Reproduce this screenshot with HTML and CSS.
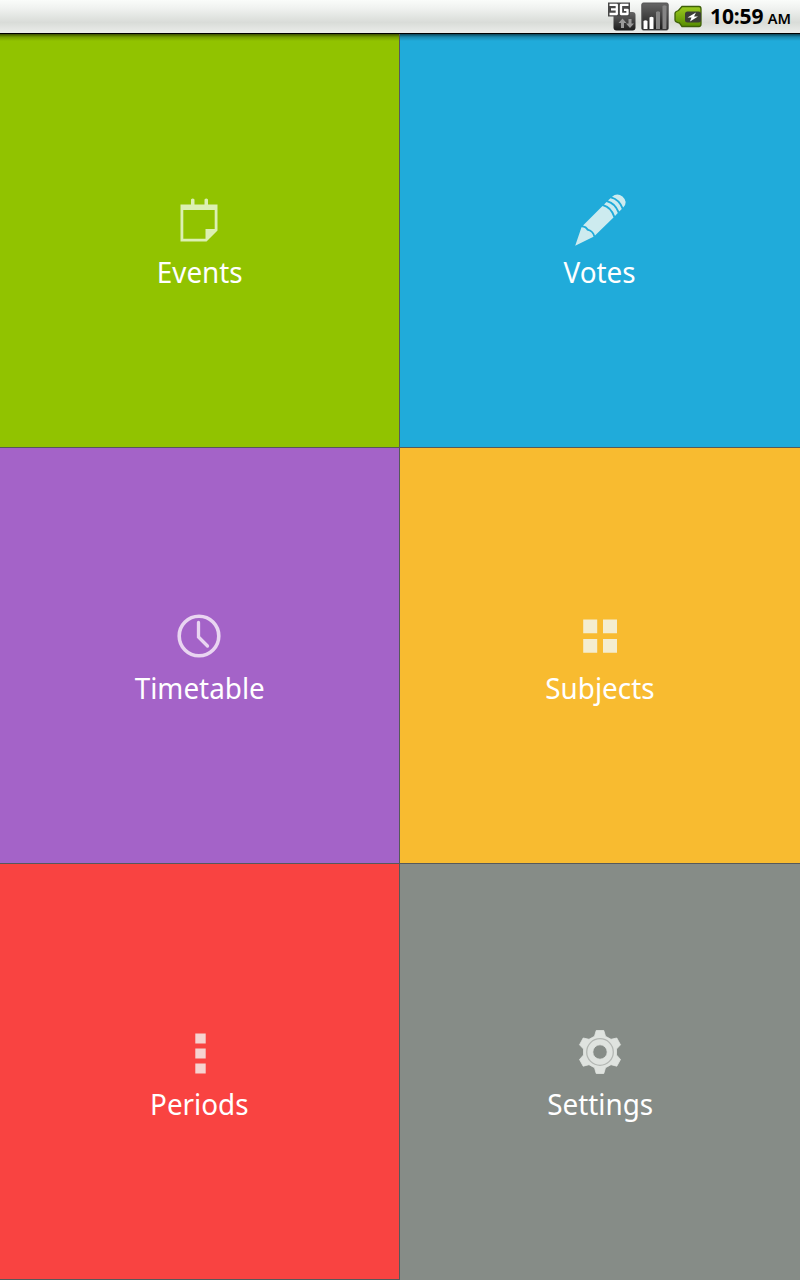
FILE: index.html
```html
<!DOCTYPE html>
<html lang="en">
<head>
<meta charset="utf-8">
<title>School diary</title>
<link rel="stylesheet" href="styles.css">
</head>
<body>
<header class="status">
  <svg class="status-icon" width="28" height="30" viewBox="0 0 28 30">
    <defs><linearGradient id="dark" x1="0" y1="0" x2="0" y2="1"><stop offset="0" stop-color="#666"/><stop offset="1" stop-color="#1c1c1c"/></linearGradient></defs>
    <rect x="5.500" y="11" width="22" height="18.500" rx="3" fill="url(#dark)"/>
    <path d="M0 1.500H22V15.500H0Z" fill="#484848"/>
    <path d="M1.500 3.800H8.800V13H1.500M3 8.400H8.800M20.500 3.800H13V13H19.500V8.800H16" fill="none" stroke="#fff" stroke-width="2.300" stroke-linejoin="round"/>
    <path d="M13 27V22H10.500L14.500 17.500L18.500 22H16V27ZM20.500 18H23.500V22.500H26L22 27L18 22.500H20.500Z" fill="#999"/>
  </svg>
  <svg class="status-icon" width="28" height="30" viewBox="0 0 28 30">
    <rect x="0.800" y="2" width="26.400" height="27" rx="1.500" fill="url(#dark)" stroke="#555"/>
    <path d="M2.500 20Q4.500 18.500 6.500 20V28H2.500ZM8.500 16.500Q10.500 15 12.500 16.500V28H8.500Z" fill="#fff"/>
    <path d="M15 11Q17 9.500 19 11V28H15ZM21.500 5Q23.500 3.500 25.500 5V28H21.500Z" fill="#858585"/>
  </svg>
  <svg class="status-icon" width="28" height="30" viewBox="0 0 28 30">
    <defs><linearGradient id="cell" x1="0" y1="0" x2="0" y2="1"><stop offset="0" stop-color="#9ccb20"/><stop offset="1" stop-color="#568c00"/></linearGradient></defs>
    <path d="M8 5.500H25Q27 5.500 27 8V23Q27 25.500 25 25.500H8L5.500 22Q1 21 1 19V12.500Q1 10.500 4.500 9.500Z" fill="url(#cell)" stroke="#3d5f08" stroke-width="1.300"/>
    <rect x="11" y="10.500" width="16" height="11" rx="2.500" fill="#3b3d36"/>
    <path d="M22 11.500L13.500 16.500H17.500L16 20.500L24 15.500H20Z" fill="#fff"/>
  </svg>
  <div class="clock">10:59 <span class="meridiem">AM</span></div>
</header>
<main class="grid">
  <section class="tile events">
    <svg class="icon" viewBox="0 0 64 64">
      <path d="M13.500 16.500H24V11.500Q25.700 9.500 27.500 11.500V16.500H37.500V11.500Q39.300 9.500 41 11.500V16.500H50.500V42.500L39.500 53.500H13.500ZM16.300 22V50.700H38.500V41H47.700V22Z" fill="currentColor" fill-rule="evenodd"/>
    </svg>
    <span class="label">Events</span>
  </section>
  <section class="tile votes">
    <svg class="icon" viewBox="0 0 64 64">
      <g fill="currentColor">
        <path d="M7.200 57.800L13.500 39.200Q17 39 19 42.500Q24.500 43.500 25.500 48.800Z"/>
        <path d="M15 37.500L34.500 18Q42.500 20 45.500 29.500L27 47.500Q25.500 42.500 20.500 41Q18.500 37.800 15 37.500Z"/>
        <path d="M36 16.500L38.500 14Q46.500 16 49.800 25L47 28Q43.500 18.500 36 16.500Z"/>
        <path d="M40 12.500L42.500 10.200Q50.500 12 53.800 21L51.300 23.500Q47.500 14.500 40 12.500Z"/>
        <path d="M44 8.800Q49 4.500 54.500 8.500Q60.500 14 55.200 19.500Q51.500 11 44 8.800Z"/>
      </g>
    </svg>
    <span class="label">Votes</span>
  </section>
  <section class="tile timetable">
    <svg class="icon" viewBox="0 0 64 64">
      <circle cx="32" cy="32" r="19.800" fill="none" stroke="currentColor" stroke-width="3.600"/>
      <path d="M31.500 18.500V33L40.500 42" fill="none" stroke="currentColor" stroke-width="3.300" stroke-linecap="round"/>
    </svg>
    <span class="label">Timetable</span>
  </section>
  <section class="tile subjects">
    <svg class="icon" viewBox="0 0 64 64">
      <path d="M15.200 15.500H29.200V29.200H15.200ZM35 15.500H49V29.200H35ZM15.200 35H29.200V48.700H15.200ZM35 35H49V48.700H35Z" fill="currentColor"/>
    </svg>
    <span class="label">Subjects</span>
  </section>
  <section class="tile periods">
    <svg class="icon" viewBox="0 0 64 64">
      <path d="M28.300 13.500H38.700V23.500H28.300ZM28.300 28.500H38.700V38.500H28.300ZM28.300 43.500H38.700V53.500H28.300Z" fill="currentColor"/>
    </svg>
    <span class="label">Periods</span>
  </section>
  <section class="tile settings">
    <svg class="icon" viewBox="0 0 64 64">
      <path d="M28.200 10.500H35.800L37.500 16.300L43 19.300L48.800 18L52.500 24.800L48.500 29V35L52.500 39.500L48.800 46.200L43 44.700L37.500 47.700L35.800 53.500H28.200L26.500 47.700L21 44.700L15.200 46.200L11.500 39.500L15.500 35V29L11.500 24.800L15.200 18L21 19.300L26.500 16.300ZM32 24.800A7.200 7.200 0 1 0 32 39.200A7.200 7.200 0 1 0 32 24.800Z" fill="currentColor" fill-rule="evenodd" stroke="currentColor" stroke-width="0.800" stroke-linejoin="round"/>
      <circle cx="32" cy="32" r="13.300" fill="none" stroke="#b3b7b3" stroke-width="1.300"/>
    </svg>
    <span class="label">Settings</span>
  </section>
</main>
</body>
</html>
```
FILE: styles.css
```css
* { box-sizing: border-box; }
body {
  margin: 0;
  width: 800px;
  height: 1280px;
  display: flex;
  flex-direction: column;
  overflow: hidden;
  font-family: "Noto Sans", "Open Sans", sans-serif;
}
.status {
  flex: none;
  height: 34px;
  display: flex;
  justify-content: flex-end;
  padding: 1px 8px 0 0;
  gap: 5px;
  background: linear-gradient(#fafcfa 0, #f0f2f0 25%, #d9dcd8 68%, #e9ebe8 96%);
  border-bottom: 1px solid #000;
}
.status-icon { flex: none; }
.clock {
  width: 85px;
  padding-left: 3px;
  font: bold 21px/31px "Noto Sans", sans-serif;
  letter-spacing: -0.1px;
  white-space: nowrap;
  color: #000;
}
.meridiem { font-size: 14.500px; font-weight: 600; margin-left: -1px; }
.grid {
  flex: 1;
  display: grid;
  grid-template-columns: 400px 400px;
  grid-template-rows: 414px 416px 416px;
}
.tile {
  display: flex;
  flex-direction: column;
  align-items: center;
  justify-content: flex-end;
  padding-bottom: 152px;
  border-bottom: 1px solid #56595a;
}
.tile:nth-child(odd) { border-right: 1px solid #56595a; }
.tile:nth-child(-n+2) {
  background-image: linear-gradient(rgba(0, 0, 0, 0.6), rgba(0, 0, 0, 0.2) 3px, transparent 7px);
}
.events { background-color: #91c300; }
.votes { background-color: #20abda; }
.timetable { background-color: #a463c8; }
.subjects { background-color: #f8bb30; }
.periods { background-color: #f94341; }
.settings { background-color: #868c87; border-bottom-color: #868c87; }
.icon { width: 64px; height: 64px; flex: none; }
.tile:nth-child(odd) .icon { margin-right: 1px; }
.events .icon { color: #dcf0b2; }
.votes .icon { color: #cdebef; }
.timetable .icon { color: #e9d5f1; }
.subjects .icon { color: #f4edcf; }
.periods .icon { color: #f6d3d0; }
.settings .icon { color: #dfe3df; }
.label {
  height: 43px;
  font-size: 29px;
  line-height: 39px;
  color: #fff;
  transform: scaleX(0.96);
}
```
